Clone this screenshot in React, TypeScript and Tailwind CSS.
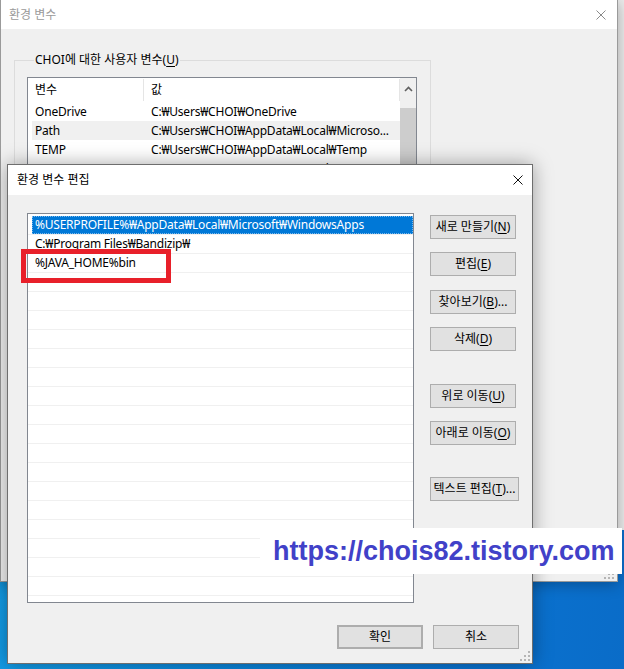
import React from "react";

const ui = "font-['Noto_Sans','Noto_Sans_CJK_KR',sans-serif] text-[12px]";

function U({ c }: { c: string }) {
  return <span className="underline underline-offset-[2px]">{c}</span>;
}

function CloseX({ color }: { color: string }) {
  return (
    <svg width="10" height="10" viewBox="0 0 10 10" fill="none" stroke={color} strokeWidth="1">
      <path d="M0.5 0.5 L9.5 9.5 M9.5 0.5 L0.5 9.5" />
    </svg>
  );
}

function Grip() {
  const dots = [
    [8, 0],
    [8, 4],
    [4, 4],
    [8, 8],
    [4, 8],
    [0, 8],
  ];
  return (
    <svg width="10" height="10" viewBox="0 0 10 10">
      {dots.map(([x, y], i) => (
        <rect key={i} x={x} y={y} width="2" height="2" fill="#b5b5b5" />
      ))}
    </svg>
  );
}

function Btn({
  children,
  className = "",
}: {
  children: React.ReactNode;
  className?: string;
}) {
  return (
    <div
      className={
        "h-[24px] w-[86px] flex items-center justify-center bg-[#e1e1e1] border border-[#adadad] text-black whitespace-nowrap " +
        className
      }
    >
      {children}
    </div>
  );
}

const userVars = [
  { name: "OneDrive", value: "C:₩Users₩CHOI₩OneDrive" },
  { name: "Path", value: "C:₩Users₩CHOI₩AppData₩Local₩Microso...", hover: true },
  { name: "TEMP", value: "C:₩Users₩CHOI₩AppData₩Local₩Temp" },
  { name: "TMP", value: "C:₩Users₩CHOI₩AppData₩Local₩Temp" },
];

const paths = [
  "%USERPROFILE%₩AppData₩Local₩Microsoft₩WindowsApps",
  "C:₩Program Files₩Bandizip₩",
  "%JAVA_HOME%bin",
];

function EnvVarsWindow() {
  return (
    <div className="absolute left-0 top-0 w-[618px] h-[582px] flex flex-col border-x border-b border-[#9a9a9a] bg-[#f0f0f0] shadow-[0_2px_14px_rgba(0,0,0,0.3)]">
      <div className="h-[29px] shrink-0 bg-white flex items-center justify-between pl-[8px] pr-[11px]">
        <span className="text-[#9a9a9a]">환경 변수</span>
        <CloseX color="#8a8a8a" />
      </div>
      <div className="flex-1 pl-[13px] pt-[23px]">
        <fieldset className="w-[417px] h-[300px] border border-[#dcdcdc] px-[12px] pt-[9px]">
          <legend className="ml-[7px] px-[1px] leading-[16px] text-black">
            CHOI에 대한 사용자 변수(<U c="U" />)
          </legend>
          <div className="w-[390px] h-[220px] border border-[#828790] bg-white flex">
            <div className="flex-1 flex flex-col">
              <div className="h-[24px] flex items-center text-black">
                <div className="w-[115px] pl-[7px]">변수</div>
                <div className="w-px h-[22px] bg-[#e5e5e5]" />
                <div className="flex-1 pl-[7px]">값</div>
                <div className="w-px h-[22px] bg-[#e5e5e5]" />
              </div>
              {userVars.map((v) => (
                <div
                  key={v.name}
                  className={
                    "h-[19px] ml-[4px] flex items-center text-black tracking-[-0.2px] " +
                    (v.hover ? "bg-[#f0f0f0]" : "")
                  }
                >
                  <div className="w-[111px] pl-[3px]">{v.name}</div>
                  <div className="flex-1 pl-[8px] whitespace-nowrap overflow-hidden">{v.value}</div>
                </div>
              ))}
            </div>
            <div className="w-[16px] flex flex-col bg-[#f0f0f0]">
              <div className="h-[30px] flex justify-center pt-[8px]">
                <svg width="9" height="6" viewBox="0 0 9 6" fill="none" stroke="#606060" strokeWidth="1.6">
                  <path d="M1 5 L4.5 1.5 L8 5" />
                </svg>
              </div>
              <div className="flex-1 bg-[#cdcdcd]" />
            </div>
          </div>
        </fieldset>
      </div>
      <div className="absolute right-[3px] bottom-[2px]">
        <Grip />
      </div>
    </div>
  );
}

function EditWindow() {
  const rows = Array.from({ length: 21 }, (_, i) => paths[i] ?? "");
  return (
    <div className="absolute left-[7px] top-[164px] w-[526px] h-[500px] flex flex-col border border-[#6e6e6e] bg-[#f0f0f0] shadow-[0_0_18px_rgba(0,0,0,0.35)]">
      <div className="h-[30px] shrink-0 bg-white flex items-center justify-between pl-[9px] pr-[9px]">
        <span className="text-black">환경 변수 편집</span>
        <CloseX color="#111" />
      </div>
      <div className="flex-1 flex flex-col pl-[19px] pr-[13px] pt-[18px]">
        <div className="flex">
          <div className="w-[390px] h-[390px] border border-[#828790] bg-white pt-[2px] overflow-hidden">
            {rows.map((p, i) => (
              <div key={i} className="h-[19px] border-b border-[#f0f0f0]">
                <div
                  className={
                    "h-full ml-[4px] pl-[3px] flex items-center whitespace-nowrap tracking-[-0.22px] " +
                    (i === 0
                      ? "bg-[#0078d7] text-white outline-1 outline-dotted outline-[#7ab8ea] -outline-offset-1"
                      : "text-black")
                  }
                >
                  {p}
                </div>
              </div>
            ))}
          </div>
          <div className="ml-[16px] mt-[2px] flex flex-col items-start">
            <Btn>
              새로 만들기(<U c="N" />)
            </Btn>
            <Btn className="mt-[13px]">
              편집(<U c="E" />)
            </Btn>
            <Btn className="mt-[14px]">
              찾아보기(<U c="B" />)...
            </Btn>
            <Btn className="mt-[13px]">
              삭제(<U c="D" />)
            </Btn>
            <Btn className="mt-[33px]">
              위로 이동(<U c="U" />)
            </Btn>
            <Btn className="mt-[13px]">
              아래로 이동(<U c="O" />)
            </Btn>
            <Btn className="mt-[32px] w-[89px]">
              텍스트 편집(<U c="T" />)...
            </Btn>
          </div>
        </div>
        <div className="mt-[22px] flex justify-end gap-[10px]">
          <Btn className="h-[23px] border-2 border-[#0078d7]">확인</Btn>
          <Btn className="h-[23px]">취소</Btn>
        </div>
      </div>
      <div className="absolute left-[13px] top-[84px] w-[150px] h-[34px] border-[5px] border-[#e8202a]" />
      <div className="absolute right-[2px] bottom-[2px]">
        <Grip />
      </div>
    </div>
  );
}

export default function App() {
  return (
    <div
      className={
        "relative w-[624px] h-[669px] overflow-hidden bg-[linear-gradient(100deg,#16a6ec_0%,#0b86da_45%,#0a74d2_75%,#0a6cc8_100%)] " +
        ui
      }
    >
      <div className="absolute left-[600px] top-0 w-[24px] h-[530px] bg-[#ececec] border-l border-[#a0a0a0]" />
      <EnvVarsWindow />
      <EditWindow />
      <div className="absolute left-[260px] top-[528px] w-[362px] h-[46px] bg-white flex items-center pl-[13px]">
        <span className="font-['Liberation_Sans',Arial,sans-serif] font-bold text-[27px] leading-none text-[#4141c8] whitespace-nowrap">
          https://chois82.tistory.com
        </span>
      </div>
    </div>
  );
}
